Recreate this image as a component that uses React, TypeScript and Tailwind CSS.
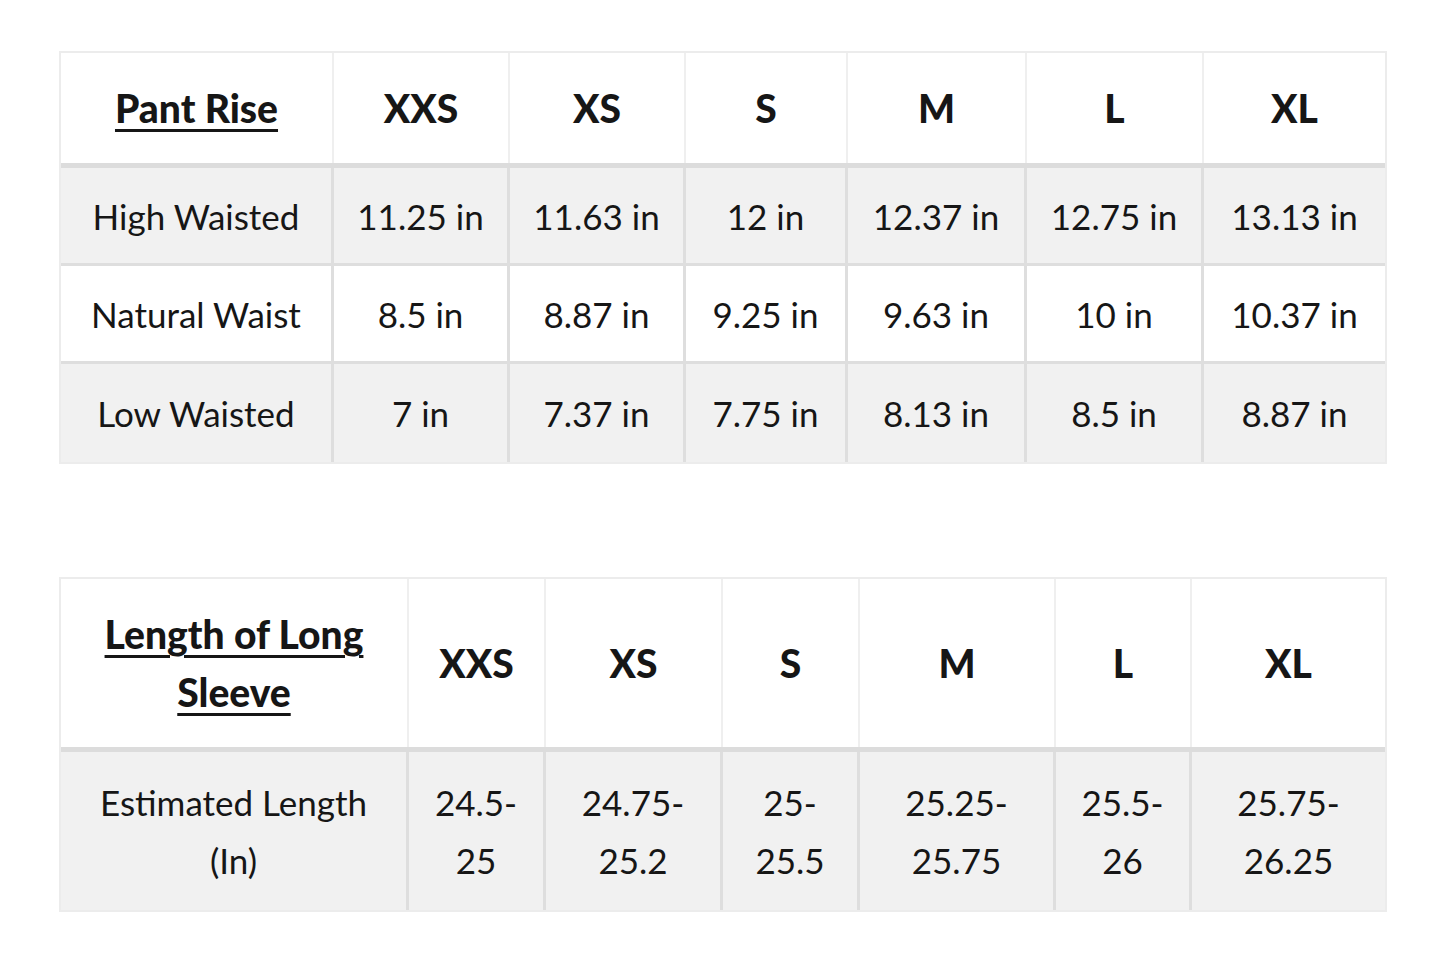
import React from 'react';

type Row = { label: React.ReactNode; values: React.ReactNode[] };

const sizes = ['XXS', 'XS', 'S', 'M', 'L', 'XL'];

const riseRows: Row[] = [
  { label: 'High Waisted', values: ['11.25 in', '11.63 in', '12 in', '12.37 in', '12.75 in', '13.13 in'] },
  { label: 'Natural Waist', values: ['8.5 in', '8.87 in', '9.25 in', '9.63 in', '10 in', '10.37 in'] },
  { label: 'Low Waisted', values: ['7 in', '7.37 in', '7.75 in', '8.13 in', '8.5 in', '8.87 in'] },
];

const sleeveRows: Row[] = [
  {
    label: (
      <>
        Estimated Length
        <br />
        (In)
      </>
    ),
    values: [
      <>24.5-<br />25</>,
      <>24.75-<br />25.2</>,
      <>25-<br />25.5</>,
      <>25.25-<br />25.75</>,
      <>25.5-<br />26</>,
      <>25.75-<br />26.25</>,
    ],
  },
];

function SizeTable({
  cols,
  title,
  rows,
  headH,
  rowH,
}: {
  cols: string;
  title: React.ReactNode;
  rows: Row[];
  headH: string;
  rowH: string;
}) {
  return (
    <div className="w-[1328px] border-2 border-[#ececec] bg-white">
      {/* Header */}
      <div className={`grid ${cols} ${headH} border-b-[5px] border-[#dcdcdc]`}>
        <div className="flex items-center justify-center text-center border-r-2 border-[#efefef] font-black text-[39px] leading-[58px]">
          <span className="underline decoration-[3px] underline-offset-[6px]">{title}</span>
        </div>
        {sizes.map((s, i) => (
          <div
            key={s}
            className={`flex items-center justify-center font-black text-[39px] ${i < sizes.length - 1 ? 'border-r-2 border-[#efefef]' : ''}`}
          >
            {s}
          </div>
        ))}
      </div>

      {/* Body */}
      {rows.map((r, ri) => (
        <div
          key={ri}
          className={`grid ${cols} ${rowH} ${ri % 2 === 0 ? 'bg-[#f1f1f1]' : 'bg-white'} ${ri < rows.length - 1 ? 'border-b-[3px] border-[#dedede]' : ''}`}
        >
          <div className="flex items-center justify-center text-center border-r-[3px] border-[#dedede] leading-[58px]">
            {r.label}
          </div>
          {r.values.map((v, i) => (
            <div
              key={i}
              className={`flex items-center justify-center text-center leading-[58px] ${i < r.values.length - 1 ? 'border-r-[3px] border-[#dedede]' : ''}`}
            >
              {v}
            </div>
          ))}
        </div>
      ))}
    </div>
  );
}

export default function App() {
  return (
    <div className="w-[1440px] h-[960px] bg-white px-[59px] pt-[51px] text-[#161616] text-[35px] font-['Lato',sans-serif]">
      <SizeTable
        cols="grid-cols-[273px_176px_176px_162px_179px_177px_1fr]"
        title="Pant Rise"
        rows={riseRows}
        headH="h-[115px]"
        rowH="h-[98px]"
      />

      <div className="mt-[113px]">
        <SizeTable
          cols="grid-cols-[348px_137px_177px_137px_196px_136px_1fr]"
          title={
            <>
              Length of Long
              <br />
              Sleeve
            </>
          }
          rows={sleeveRows}
          headH="h-[173px]"
          rowH="h-[158px]"
        />
      </div>
    </div>
  );
}
